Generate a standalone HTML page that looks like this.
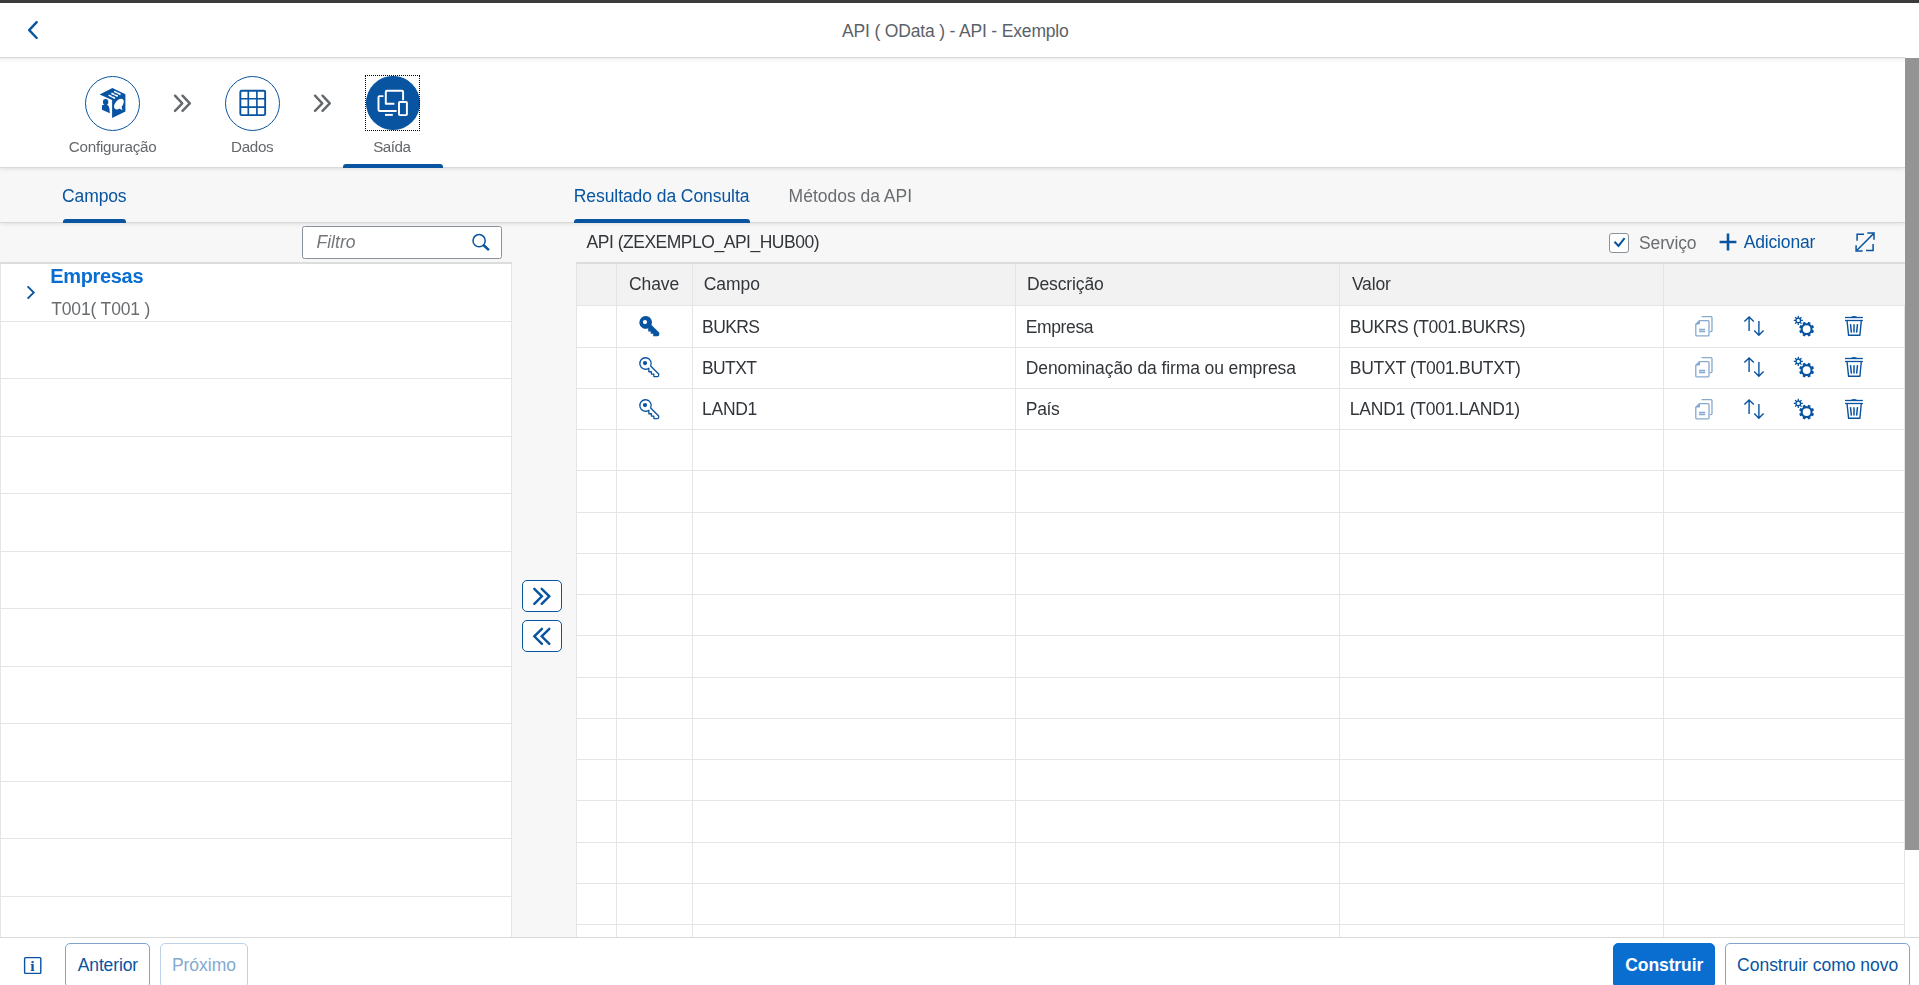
<!DOCTYPE html>
<html lang="pt-BR">
<head>
<meta charset="utf-8">
<title>API ( OData ) - API - Exemplo</title>
<style>
*{box-sizing:border-box;margin:0;padding:0}
html,body{width:1919px;height:985px;overflow:hidden;background:#f7f7f7}
body{position:relative;font-family:"Liberation Sans",sans-serif;font-size:17.5px;color:#32363a}
.abs{position:absolute}
#content{position:absolute;left:0;top:0;width:1919px;height:985px;will-change:transform}
.t{position:absolute;white-space:nowrap;line-height:20px;font-size:17.5px}
svg{position:absolute;overflow:visible}
#topbar{left:0;top:0;width:1919px;height:3px;background:#3b3b3b}
#header{left:0;top:3px;width:1919px;height:54px;background:#fff}
#title{color:#5b6168}
#wiz{left:0;top:58px;width:1905px;height:110px;background:#fff;box-shadow:inset 0 -1px #d9d9d9,0 0 5px rgba(0,0,0,.15);clip-path:inset(0 0 -12px 0)}
.circ{position:absolute;width:55px;height:55px;border-radius:50%;border:1.5px solid #0854a0;background:#fff;top:76px}
.circ.sel{background:#0854a0}
.slabel{font-size:15.2px;color:#65686b}
#selline{left:343px;top:164px;width:100px;height:4px;background:#0854a0;border-radius:3px 3px 0 0}
#focus{left:365px;top:75px;width:55px;height:56px;border:1px dotted #000}
#tabbar{left:0;top:168px;width:1905px;height:55px;background:#f7f7f7;box-shadow:inset 0 -1px #d9d9d9,0 0 5px rgba(0,0,0,.15)}
.tab{color:#0854a0}
.tabline{position:absolute;height:4px;background:#0854a0;border-radius:3px 3px 0 0;top:219px}
#list{left:0;top:262px;width:512px;height:675px;background:#fff;border:1px solid #e5e5e5;border-top:2px solid #dcdcdc;border-bottom:none}
.lrow{position:absolute;left:0;width:511px;height:1px;background:#e5e5e5}
#filter{left:302px;top:226px;width:200px;height:32.5px;background:#fff;border:1px solid #89919a;border-radius:2.5px}
.mbtn{position:absolute;left:522px;width:40px;height:32px;background:#fff;border:1px solid #0854a0;border-radius:5px}
#tbl{left:576px;top:262px;width:1329px;height:675px;background:#fff;border-left:1px solid #e5e5e5;border-top:2px solid #dcdcdc}
#thead{left:577px;top:264px;width:1328px;height:41px;background:#f2f2f2}
.hl{position:absolute;left:577px;width:1328px;height:1px;background:#e5e5e5}
.vl{position:absolute;top:264px;width:1px;height:673px;background:#e5e5e5}
#sbtrack{left:1905px;top:57px;width:14px;height:880px;background:#fff}
#sbthumb{left:1905px;top:58px;width:14px;height:792px;background:#949494}
#footer{left:0;top:937px;width:1919px;height:48px;background:#fff;border-top:1px solid #d9d9d9}
.btn{position:absolute;height:45px;border:1px solid #7ea4cf;border-radius:5px;background:#fff}
</style>
</head>
<body>
<div id="header" class="abs"></div>
<div id="topbar" class="abs"></div>
<div id="title" class="t " style="left:842.00px;top:21px;letter-spacing:-0.166px;color:#5b6168">API ( OData ) - API - Exemplo</div>
<svg style="left:27px;top:21px" width="12" height="19" viewBox="0 0 12 19"><path d="M9.7 1.2 L2.2 9.1 L9.7 17" fill="none" stroke="#0854a0" stroke-width="2.4" stroke-linecap="round" stroke-linejoin="round"/></svg>
<div id="footer" class="abs"></div>
<svg style="left:23px;top:956px" width="19" height="19" viewBox="0 0 19 19"><rect x="1.6" y="1.6" width="16.2" height="15.8" rx="0.8" fill="none" stroke="#0854a0" stroke-width="1.4"/></svg>
<div class="t" style="left:23px;top:955.6px;width:19px;text-align:center;font-family:'Liberation Serif',serif;font-weight:700;font-size:15.5px;color:#0854a0">i</div>
<div class="btn" style="left:65px;top:943px;width:85px"></div>
<div class="btn" style="left:160px;top:943px;width:88px;border-color:#bcd0e6"></div>
<div class="btn" style="left:1613px;top:943px;width:102px;background:#0a6ed1;border-color:#0a6ed1"></div>
<div class="btn" style="left:1725px;top:943px;width:185px"></div>
<div id="b1" class="t " style="left:77.78px;top:955px;letter-spacing:-0.136px;color:#0854a0">Anterior</div>
<div id="b2" class="t " style="left:171.88px;top:955px;letter-spacing:-0.012px;color:#84a9cf">Próximo</div>
<div id="b3" class="t " style="left:1625.22px;top:955px;letter-spacing:-0.085px;color:#fff;font-weight:700">Construir</div>
<div id="b4" class="t " style="left:1737.10px;top:955px;letter-spacing:-0.022px;color:#0854a0">Construir como novo</div>
<div id="content">
<div id="tabbar" class="abs"></div>
<div id="wiz" class="abs"></div>
<div class="abs" style="left:-10px;top:-10px;width:1939px;height:68px;box-shadow:0 0 5px rgba(0,0,0,.15)"></div><div class="abs" style="left:0;top:57px;width:1919px;height:1px;background:#d9d9d9"></div>
<div class="circ" style="left:85px"></div><div class="circ" style="left:225px"></div><div class="circ sel" style="left:366px;top:76px;width:53.5px;height:54px"></div><div id="focus" class="abs"></div>
<svg style="left:99px;top:87px" width="28" height="32" viewBox="99 87 28 32">
 <path d="M112.4 88 L125.4 94.3 L125.4 111.4 L112.1 118 L112.1 100.1 L99.6 94.4 Z" fill="#0854a0"/>
 <path d="M114.2 91.4 L120.6 94.5 M111.4 93.2 L117.8 96.3 M108.6 95.1 L115 98.2" stroke="#fff" stroke-width="1.55" fill="none"/>
 <path d="M111.6 96.9 L117.6 92.7" stroke="#0854a0" stroke-width="0.6" fill="none"/>
 <ellipse cx="118.9" cy="104.1" rx="6.2" ry="3.7" transform="rotate(-50 118.9 104.1)" fill="#fff"/>
 <path d="M119.2 108.2 L122.4 110.2 L121.6 106.2 Z" fill="#fff"/>
 <ellipse cx="105.6" cy="101.9" rx="2.7" ry="2.9" fill="#0854a0"/><path d="M104.6 103.6 H107 V105.6 H104.6 Z" fill="#0854a0"/>
 <path d="M102 105.6 Q102 105 102.8 105 L106.6 104.4 Q109.2 105.6 109.4 108.4 L109.8 113.2 L102 109.8 Z" fill="#0854a0"/>
</svg>
<svg style="left:238px;top:89px" width="29" height="29" viewBox="238 89 29 29">
 <rect x="240.35" y="90.75" width="24.8" height="24.4" rx="1.3" fill="none" stroke="#0854a0" stroke-width="1.9"/>
 <path d="M248.3 91 V115 M256.9 91 V115 M240.4 98.7 H265 M240.4 107.1 H265" stroke="#0854a0" stroke-width="1.65" fill="none"/>
</svg>
<svg style="left:375px;top:88px" width="35" height="30" viewBox="375 88 35 30">
 <g fill="none" stroke="#fff" stroke-width="1.95" stroke-linejoin="round">
  <path d="M383.4 96.1 H379.6 Q378.5 96.1 378.5 97.2 V109.8 Q378.5 110.9 379.6 110.9 H396.6"/>
  <path d="M394.4 103.8 H385.8 V91.9 Q385.8 90.8 386.9 90.8 H402 Q403.1 90.8 403.1 91.9 V100.2"/>
  <rect x="399" y="102" width="7.9" height="13.1" rx="0.8"/>
  <path d="M385 114.9 H392.8"/>
 </g></svg>
<svg style="left:173px;top:94px" width="19" height="19" viewBox="0 0 19 19"><path d="M2 1.7 L9.3 9.3 L2 16.9 M9.5 1.7 L16.8 9.3 L9.5 16.9" fill="none" stroke="#64686c" stroke-width="2.4" stroke-linecap="round" stroke-linejoin="round"/></svg>
<svg style="left:313px;top:94px" width="19" height="19" viewBox="0 0 19 19"><path d="M2 1.7 L9.3 9.3 L2 16.9 M9.5 1.7 L16.8 9.3 L9.5 16.9" fill="none" stroke="#64686c" stroke-width="2.4" stroke-linecap="round" stroke-linejoin="round"/></svg>
<div id="s1" class="t slabel" style="left:68.76px;top:137px;letter-spacing:-0.218px;">Configuração</div>
<div id="s2" class="t slabel" style="left:231.02px;top:137px;letter-spacing:-0.301px;">Dados</div>
<div id="s3" class="t slabel" style="left:373.15px;top:137px;letter-spacing:-0.451px;">Saída</div>
<div id="selline" class="abs"></div>
<div id="tab1" class="t tab" style="left:62.10px;top:186px;letter-spacing:-0.130px;">Campos</div>
<div class="tabline" style="left:63px;width:63px"></div>
<div id="tab2" class="t tab" style="left:573.77px;top:186px;letter-spacing:-0.069px;">Resultado da Consulta</div>
<div class="tabline" style="left:574px;width:176px"></div>
<div id="tab3" class="t " style="left:788.60px;top:186px;letter-spacing:-0.012px;color:#6a6d70">Métodos da API</div>
<div id="list" class="abs"></div>
<div class="lrow" style="top:321px"></div>
<div class="lrow" style="top:378px"></div>
<div class="lrow" style="top:436px"></div>
<div class="lrow" style="top:493px"></div>
<div class="lrow" style="top:551px"></div>
<div class="lrow" style="top:608px"></div>
<div class="lrow" style="top:666px"></div>
<div class="lrow" style="top:723px"></div>
<div class="lrow" style="top:781px"></div>
<div class="lrow" style="top:838px"></div>
<div class="lrow" style="top:896px"></div>
<div id="filter" class="abs"></div>
<div id="filtro" class="t " style="left:316.50px;top:232px;letter-spacing:0.020px;font-style:italic;color:#74777a">Filtro</div>
<svg style="left:471px;top:233px" width="20" height="20" viewBox="0 0 20 20"><circle cx="8.1" cy="7.7" r="6.1" fill="none" stroke="#0854a0" stroke-width="1.5"/><path d="M12.4 12 L17.9 17.1" stroke="#0854a0" stroke-width="2.5"/></svg>
<svg style="left:26px;top:285px" width="10" height="15" viewBox="0 0 10 15"><path d="M1.6 1.4 L7.8 7.5 L1.6 13.6" fill="none" stroke="#0854a0" stroke-width="1.8"/></svg>
<div id="emp" class="t " style="left:50.29px;top:266px;letter-spacing:-0.341px;font-size:20px;font-weight:700;color:#0a6ed1">Empresas</div>
<div id="t001" class="t " style="left:51.19px;top:299px;letter-spacing:-0.144px;color:#6a6d70">T001( T001 )</div>
<div class="mbtn" style="top:580px"><svg style="left:10.2px;top:6px" width="18" height="19" viewBox="0 0 18 19"><path d="M1.3 1.8 L8.9 9.3 L1.3 16.8 M8.7 1.8 L16.3 9.3 L8.7 16.8" fill="none" stroke="#0854a0" stroke-width="2.4" stroke-linecap="round"/></svg></div>
<div class="mbtn" style="top:620px"><svg style="left:10.2px;top:6px" width="18" height="19" viewBox="0 0 18 19"><path d="M16.3 1.8 L8.7 9.3 L16.3 16.8 M8.9 1.8 L1.3 9.3 L8.9 16.8" fill="none" stroke="#0854a0" stroke-width="2.4" stroke-linecap="round"/></svg></div>
<div id="tbl" class="abs"></div><div id="thead" class="abs"></div>
<div class="hl" style="top:305px"></div>
<div class="hl" style="top:347px"></div>
<div class="hl" style="top:388px"></div>
<div class="hl" style="top:429px"></div>
<div class="hl" style="top:470px"></div>
<div class="hl" style="top:512px"></div>
<div class="hl" style="top:553px"></div>
<div class="hl" style="top:594px"></div>
<div class="hl" style="top:635px"></div>
<div class="hl" style="top:677px"></div>
<div class="hl" style="top:718px"></div>
<div class="hl" style="top:759px"></div>
<div class="hl" style="top:800px"></div>
<div class="hl" style="top:842px"></div>
<div class="hl" style="top:883px"></div>
<div class="hl" style="top:924px"></div>
<div class="vl" style="left:616px"></div>
<div class="vl" style="left:692px"></div>
<div class="vl" style="left:1015px"></div>
<div class="vl" style="left:1339px"></div>
<div class="vl" style="left:1663px"></div>
<div class="vl" style="left:1904px;top:306px;height:631px"></div>
<div id="apiname" class="t " style="left:586.50px;top:232px;letter-spacing:-0.481px;">API (ZEXEMPLO_API_HUB00)</div>
<div id="h1" class="t " style="left:629.02px;top:274px;letter-spacing:-0.111px;">Chave</div>
<div id="h2" class="t " style="left:703.66px;top:274px;letter-spacing:-0.015px;">Campo</div>
<div id="h3" class="t " style="left:1026.88px;top:274px;letter-spacing:-0.119px;">Descrição</div>
<div id="h4" class="t " style="left:1351.91px;top:274px;letter-spacing:-0.168px;">Valor</div>
<div id="r0a" class="t " style="left:702.10px;top:317px;letter-spacing:-0.622px;">BUKRS</div>
<div id="r0b" class="t " style="left:1025.82px;top:317px;letter-spacing:-0.393px;">Empresa</div>
<div id="r0c" class="t " style="left:1349.82px;top:317px;letter-spacing:-0.358px;">BUKRS (T001.BUKRS)</div>
<svg style="left:639px;top:316px" width="21" height="21" viewBox="0 0 21 21"><path d="M12.5 9.0 A6.4 6.4 0 1 0 9.2 12.3 L9.2 15.4 L11.7 15.4 L11.7 17.7 L14.2 17.7 L14.2 20.2 L18.4 20.2 Q20.3 20.2 20.3 18.4 L20.3 16.8 Z M6 4 a2.1 2.1 0 1 1 0 4.2 a2.1 2.1 0 1 1 0 -4.2 Z" fill="#0854a0" fill-rule="evenodd"/></svg>
<svg style="left:1694px;top:316px" width="20" height="21" viewBox="0 0 20 21"><g fill="none" stroke="#86a9d0" stroke-width="1.3" stroke-linejoin="round"><path d="M7.6 0.7 H17 Q18 0.7 18 1.7 V14.6 Q18 15.6 17 15.6 H15.9"/><path d="M1.8 8.2 L5.4 4.7 H14 Q15 4.7 15 5.7 V18.9 Q15 19.9 14 19.9 H2.8 Q1.8 19.9 1.8 18.9 Z"/><path d="M5 13.5 H11.2 M5 15.5 H11.2"/></g><path d="M1.6 8.6 L6 4.4 V7.6 Q6 8.6 5 8.6 Z" fill="#86a9d0"/></svg>
<svg style="left:1743px;top:316px" width="22" height="20" viewBox="0 0 22 20"><g fill="none" stroke="#0854a0" stroke-width="1.4"><path d="M6.1 1.2 V15 M1.4 5.6 L6.1 0.9 L10.8 5.6"/><path d="M15.9 5.1 V18.9 M11.2 14.5 L15.9 19.2 L20.6 14.5"/></g></svg>
<svg style="left:1793px;top:316px" width="22" height="22" viewBox="0 0 22 22"><path d="M19.54 13.95 L21.02 14.76 L20.02 17.17 L18.40 16.70 L17.20 17.90 L17.67 19.52 L15.26 20.52 L14.45 19.04 L12.75 19.04 L11.94 20.52 L9.53 19.52 L10.00 17.90 L8.80 16.70 L7.18 17.17 L6.18 14.76 L7.66 13.95 L7.66 12.25 L6.18 11.44 L7.18 9.03 L8.80 9.50 L10.00 8.30 L9.53 6.68 L11.94 5.68 L12.75 7.16 L14.45 7.16 L15.26 5.68 L17.67 6.68 L17.20 8.30 L18.40 9.50 L20.02 9.03 L21.02 11.44 L19.54 12.25 Z M9.70 13.10 a3.9 3.9 0 1 0 7.8 0 a3.9 3.9 0 1 0 -7.8 0 Z" fill="#0854a0" fill-rule="evenodd"/><path d="M8.22 3.70 L9.86 3.82 L9.86 4.98 L8.22 5.10 L7.86 5.97 L8.93 7.22 L8.12 8.03 L6.87 6.96 L6.00 7.32 L5.88 8.96 L4.72 8.96 L4.60 7.32 L3.73 6.96 L2.48 8.03 L1.67 7.22 L2.74 5.97 L2.38 5.10 L0.74 4.98 L0.74 3.82 L2.38 3.70 L2.74 2.83 L1.67 1.58 L2.48 0.77 L3.73 1.84 L4.60 1.48 L4.72 -0.16 L5.88 -0.16 L6.00 1.48 L6.87 1.84 L8.12 0.77 L8.93 1.58 L7.86 2.83 Z M3.70 4.40 a1.6 1.6 0 1 0 3.2 0 a1.6 1.6 0 1 0 -3.2 0 Z" fill="#0854a0" fill-rule="evenodd"/></svg>
<svg style="left:1844px;top:316px" width="20" height="20" viewBox="0 0 20 20"><g fill="none" stroke="#0854a0" stroke-linejoin="round"><path d="M1 1.5 H18.9" stroke-width="1.3"/><path d="M7.2 1.2 Q10 -0.6 12.8 1.2 Z" fill="#0854a0" stroke-width="0.6"/><path d="M1 4.5 H18.9" stroke-width="1.3"/><path d="M3 4.5 L4.6 19.3 H15.9 L17.3 4.5" stroke-width="1.4"/><path d="M6.5 8.2 L7.4 16.6 M10 8.2 V16.6 M13.5 8.2 L12.6 16.6" stroke-width="1.5"/></g></svg>
<div id="r1a" class="t " style="left:702.10px;top:358px;letter-spacing:-0.647px;">BUTXT</div>
<div id="r1b" class="t " style="left:1025.82px;top:358px;letter-spacing:-0.106px;">Denominação da firma ou empresa</div>
<div id="r1c" class="t " style="left:1349.82px;top:358px;letter-spacing:-0.273px;">BUTXT (T001.BUTXT)</div>
<svg style="left:639px;top:357.2px" width="21" height="21" viewBox="0 0 21 21"><path d="M11.65 9.07 A5.75 5.75 0 1 0 9.85 11.17 L9.85 14.75 L12.35 14.75 L12.35 17.05 L14.85 17.05 L14.85 19.55 L18.4 19.55 Q19.65 19.55 19.65 18.4 L19.65 17.07 Z" fill="none" stroke="#0854a0" stroke-width="1.3" stroke-linejoin="round"/><circle cx="6" cy="6.1" r="2.1" fill="#0854a0"/></svg>
<svg style="left:1694px;top:357.2px" width="20" height="21" viewBox="0 0 20 21"><g fill="none" stroke="#86a9d0" stroke-width="1.3" stroke-linejoin="round"><path d="M7.6 0.7 H17 Q18 0.7 18 1.7 V14.6 Q18 15.6 17 15.6 H15.9"/><path d="M1.8 8.2 L5.4 4.7 H14 Q15 4.7 15 5.7 V18.9 Q15 19.9 14 19.9 H2.8 Q1.8 19.9 1.8 18.9 Z"/><path d="M5 13.5 H11.2 M5 15.5 H11.2"/></g><path d="M1.6 8.6 L6 4.4 V7.6 Q6 8.6 5 8.6 Z" fill="#86a9d0"/></svg>
<svg style="left:1743px;top:357.2px" width="22" height="20" viewBox="0 0 22 20"><g fill="none" stroke="#0854a0" stroke-width="1.4"><path d="M6.1 1.2 V15 M1.4 5.6 L6.1 0.9 L10.8 5.6"/><path d="M15.9 5.1 V18.9 M11.2 14.5 L15.9 19.2 L20.6 14.5"/></g></svg>
<svg style="left:1793px;top:357.2px" width="22" height="22" viewBox="0 0 22 22"><path d="M19.54 13.95 L21.02 14.76 L20.02 17.17 L18.40 16.70 L17.20 17.90 L17.67 19.52 L15.26 20.52 L14.45 19.04 L12.75 19.04 L11.94 20.52 L9.53 19.52 L10.00 17.90 L8.80 16.70 L7.18 17.17 L6.18 14.76 L7.66 13.95 L7.66 12.25 L6.18 11.44 L7.18 9.03 L8.80 9.50 L10.00 8.30 L9.53 6.68 L11.94 5.68 L12.75 7.16 L14.45 7.16 L15.26 5.68 L17.67 6.68 L17.20 8.30 L18.40 9.50 L20.02 9.03 L21.02 11.44 L19.54 12.25 Z M9.70 13.10 a3.9 3.9 0 1 0 7.8 0 a3.9 3.9 0 1 0 -7.8 0 Z" fill="#0854a0" fill-rule="evenodd"/><path d="M8.22 3.70 L9.86 3.82 L9.86 4.98 L8.22 5.10 L7.86 5.97 L8.93 7.22 L8.12 8.03 L6.87 6.96 L6.00 7.32 L5.88 8.96 L4.72 8.96 L4.60 7.32 L3.73 6.96 L2.48 8.03 L1.67 7.22 L2.74 5.97 L2.38 5.10 L0.74 4.98 L0.74 3.82 L2.38 3.70 L2.74 2.83 L1.67 1.58 L2.48 0.77 L3.73 1.84 L4.60 1.48 L4.72 -0.16 L5.88 -0.16 L6.00 1.48 L6.87 1.84 L8.12 0.77 L8.93 1.58 L7.86 2.83 Z M3.70 4.40 a1.6 1.6 0 1 0 3.2 0 a1.6 1.6 0 1 0 -3.2 0 Z" fill="#0854a0" fill-rule="evenodd"/></svg>
<svg style="left:1844px;top:357.2px" width="20" height="20" viewBox="0 0 20 20"><g fill="none" stroke="#0854a0" stroke-linejoin="round"><path d="M1 1.5 H18.9" stroke-width="1.3"/><path d="M7.2 1.2 Q10 -0.6 12.8 1.2 Z" fill="#0854a0" stroke-width="0.6"/><path d="M1 4.5 H18.9" stroke-width="1.3"/><path d="M3 4.5 L4.6 19.3 H15.9 L17.3 4.5" stroke-width="1.4"/><path d="M6.5 8.2 L7.4 16.6 M10 8.2 V16.6 M13.5 8.2 L12.6 16.6" stroke-width="1.5"/></g></svg>
<div id="r2a" class="t " style="left:702.10px;top:399px;letter-spacing:-0.297px;">LAND1</div>
<div id="r2b" class="t " style="left:1025.82px;top:399px;letter-spacing:-0.350px;">País</div>
<div id="r2c" class="t " style="left:1349.82px;top:399px;letter-spacing:-0.229px;">LAND1 (T001.LAND1)</div>
<svg style="left:639px;top:398.8px" width="21" height="21" viewBox="0 0 21 21"><path d="M11.65 9.07 A5.75 5.75 0 1 0 9.85 11.17 L9.85 14.75 L12.35 14.75 L12.35 17.05 L14.85 17.05 L14.85 19.55 L18.4 19.55 Q19.65 19.55 19.65 18.4 L19.65 17.07 Z" fill="none" stroke="#0854a0" stroke-width="1.3" stroke-linejoin="round"/><circle cx="6" cy="6.1" r="2.1" fill="#0854a0"/></svg>
<svg style="left:1694px;top:398.8px" width="20" height="21" viewBox="0 0 20 21"><g fill="none" stroke="#86a9d0" stroke-width="1.3" stroke-linejoin="round"><path d="M7.6 0.7 H17 Q18 0.7 18 1.7 V14.6 Q18 15.6 17 15.6 H15.9"/><path d="M1.8 8.2 L5.4 4.7 H14 Q15 4.7 15 5.7 V18.9 Q15 19.9 14 19.9 H2.8 Q1.8 19.9 1.8 18.9 Z"/><path d="M5 13.5 H11.2 M5 15.5 H11.2"/></g><path d="M1.6 8.6 L6 4.4 V7.6 Q6 8.6 5 8.6 Z" fill="#86a9d0"/></svg>
<svg style="left:1743px;top:398.8px" width="22" height="20" viewBox="0 0 22 20"><g fill="none" stroke="#0854a0" stroke-width="1.4"><path d="M6.1 1.2 V15 M1.4 5.6 L6.1 0.9 L10.8 5.6"/><path d="M15.9 5.1 V18.9 M11.2 14.5 L15.9 19.2 L20.6 14.5"/></g></svg>
<svg style="left:1793px;top:398.8px" width="22" height="22" viewBox="0 0 22 22"><path d="M19.54 13.95 L21.02 14.76 L20.02 17.17 L18.40 16.70 L17.20 17.90 L17.67 19.52 L15.26 20.52 L14.45 19.04 L12.75 19.04 L11.94 20.52 L9.53 19.52 L10.00 17.90 L8.80 16.70 L7.18 17.17 L6.18 14.76 L7.66 13.95 L7.66 12.25 L6.18 11.44 L7.18 9.03 L8.80 9.50 L10.00 8.30 L9.53 6.68 L11.94 5.68 L12.75 7.16 L14.45 7.16 L15.26 5.68 L17.67 6.68 L17.20 8.30 L18.40 9.50 L20.02 9.03 L21.02 11.44 L19.54 12.25 Z M9.70 13.10 a3.9 3.9 0 1 0 7.8 0 a3.9 3.9 0 1 0 -7.8 0 Z" fill="#0854a0" fill-rule="evenodd"/><path d="M8.22 3.70 L9.86 3.82 L9.86 4.98 L8.22 5.10 L7.86 5.97 L8.93 7.22 L8.12 8.03 L6.87 6.96 L6.00 7.32 L5.88 8.96 L4.72 8.96 L4.60 7.32 L3.73 6.96 L2.48 8.03 L1.67 7.22 L2.74 5.97 L2.38 5.10 L0.74 4.98 L0.74 3.82 L2.38 3.70 L2.74 2.83 L1.67 1.58 L2.48 0.77 L3.73 1.84 L4.60 1.48 L4.72 -0.16 L5.88 -0.16 L6.00 1.48 L6.87 1.84 L8.12 0.77 L8.93 1.58 L7.86 2.83 Z M3.70 4.40 a1.6 1.6 0 1 0 3.2 0 a1.6 1.6 0 1 0 -3.2 0 Z" fill="#0854a0" fill-rule="evenodd"/></svg>
<svg style="left:1844px;top:398.8px" width="20" height="20" viewBox="0 0 20 20"><g fill="none" stroke="#0854a0" stroke-linejoin="round"><path d="M1 1.5 H18.9" stroke-width="1.3"/><path d="M7.2 1.2 Q10 -0.6 12.8 1.2 Z" fill="#0854a0" stroke-width="0.6"/><path d="M1 4.5 H18.9" stroke-width="1.3"/><path d="M3 4.5 L4.6 19.3 H15.9 L17.3 4.5" stroke-width="1.4"/><path d="M6.5 8.2 L7.4 16.6 M10 8.2 V16.6 M13.5 8.2 L12.6 16.6" stroke-width="1.5"/></g></svg>
<div class="abs" style="left:1609px;top:233px;width:20px;height:20px;background:#fff;border:1px solid #89919a;border-radius:3px"></div>
<svg style="left:1613px;top:237px" width="13" height="12" viewBox="0 0 13 12"><path d="M1.5 4.8 L5.5 8.9 L11.6 1.1" fill="none" stroke="#0854a0" stroke-width="2"/></svg>
<div id="servico" class="t " style="left:1639.10px;top:233px;letter-spacing:-0.166px;color:#6a6d70">Serviço</div>
<svg style="left:1719px;top:233px" width="18" height="18" viewBox="0 0 18 18"><path d="M9 0.6 V17.4 M0.6 9 H17.4" stroke="#0854a0" stroke-width="2.6" fill="none"/></svg>
<div id="adic" class="t " style="left:1743.78px;top:232px;letter-spacing:-0.174px;color:#0854a0">Adicionar</div>
<svg style="left:1855px;top:232px" width="20" height="20" viewBox="0 0 20 20"><g fill="none" stroke="#0854a0" stroke-width="1.5"><path d="M1.4 18.8 L18.8 1.4"/><path d="M12.3 1.1 H19 V7.8"/><path d="M1.1 13.2 V19 H7.6"/><path d="M2.1 8.8 V2.2 H9"/><path d="M11 18.4 H18.1 V11.9"/></g></svg>
<div id="sbtrack" class="abs"></div><div id="sbthumb" class="abs"></div>
</div>
</body>
</html>
